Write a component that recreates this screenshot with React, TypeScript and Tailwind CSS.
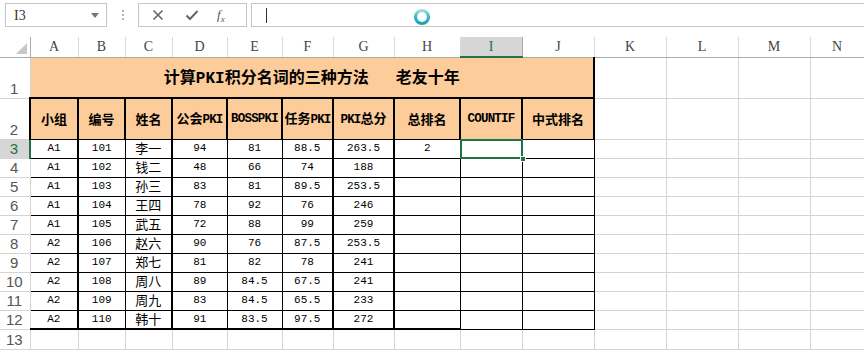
import React from "react";

const cols = ["A", "B", "C", "D", "E", "F", "G", "H", "I", "J", "K", "L", "M", "N"];
const widths = [30, 48, 47, 47, 55, 55, 51, 61, 66, 62, 72, 72, 72, 72, 54];

const rows = [
  ["A1", "101", "李一", "94", "81", "88.5", "263.5", "2"],
  ["A1", "102", "钱二", "48", "66", "74", "188", ""],
  ["A1", "103", "孙三", "83", "81", "89.5", "253.5", ""],
  ["A1", "104", "王四", "78", "92", "76", "246", ""],
  ["A1", "105", "武五", "72", "88", "99", "259", ""],
  ["A2", "106", "赵六", "90", "76", "87.5", "253.5", ""],
  ["A2", "107", "郑七", "81", "82", "78", "241", ""],
  ["A2", "108", "周八", "89", "84.5", "67.5", "241", ""],
  ["A2", "109", "周九", "83", "84.5", "65.5", "233", ""],
  ["A2", "110", "韩十", "91", "83.5", "97.5", "272", ""],
];

// right border per data column (A..J): thick after A, C, F, G
const rightBorder = [
  "border-r-2 border-r-black",
  "border-r border-r-black",
  "border-r-2 border-r-black",
  "border-r border-r-black",
  "border-r border-r-black",
  "border-r-2 border-r-black",
  "border-r-2 border-r-black",
  "border-r border-r-black",
  "border-r border-r-black",
  "border-r border-r-black",
];

const headers = ["小组", "编号", "姓名", "公会PKI", "BOSSPKI", "任务PKI", "PKI总分", "总排名", "COUNTIF", "中式排名"];

const cjk = { fontFamily: '"Noto Sans CJK SC", sans-serif' };
const mono = { fontFamily: '"Liberation Mono", "Noto Sans CJK SC", monospace' };

const RowHead = ({ n, active }: { n: number; active?: boolean }) => (
  <td
    className={`border-r border-b border-[#d4d4d4] p-0 pr-[1px] text-center align-bottom text-[15px] leading-[18px] ${
      active ? "bg-[#d6d6d6] text-[#217346] border-r-2 border-r-[#217346]" : "bg-white text-[#555]"
    }`}
    style={{ fontFamily: '"Liberation Sans", sans-serif' }}
  >
    {n}
  </td>
);

const Header = ({ text }: { text: string }) => {
  const parts = text.split(/([A-Z]+)/).filter(Boolean);
  return (
    <td className="border-2 border-black border-b border-b-black bg-[#fccc9a] p-0 text-center align-middle font-bold text-[13px] text-black whitespace-nowrap">
      {parts.map((p, i) =>
        /^[A-Z]+$/.test(p) ? (
          <span key={i} className="text-[12.5px] tracking-[-0.8px]" style={mono}>
            {p}
          </span>
        ) : (
          <span key={i} style={cjk}>
            {p}
          </span>
        )
      )}
    </td>
  );
};

const Empty = () => <td className="border-r border-b border-[#d4d4d4] p-0" />;

export default function App() {
  return (
    <div className="w-[864px] h-[352px] overflow-hidden bg-white select-none">
      {/* formula bar */}
      <div className="flex items-start h-[37px] pt-[3px]">
        <div className="ml-[5px] flex h-[24px] w-[102px] items-center justify-between border border-[#c6c6c6] pl-[8px] pr-[7px]">
          <span className="text-[14px] text-[#333]" style={{ fontFamily: '"Liberation Serif", serif' }}>
            I3
          </span>
          <svg width="8" height="5" viewBox="0 0 8 5">
            <path d="M0 0 L8 0 L4 5 Z" fill="#777" />
          </svg>
        </div>
        <div className="flex h-[24px] w-[31px] flex-col items-center justify-center gap-[2px]">
          <span className="h-[2px] w-[2px] bg-[#b5b5b5]" />
          <span className="h-[2px] w-[2px] bg-[#b5b5b5]" />
          <span className="h-[2px] w-[2px] bg-[#b5b5b5]" />
        </div>
        <div className="flex h-[24px] w-[109px] items-center border border-[#c6c6c6] pl-[13px]">
          <svg width="12" height="12" viewBox="0 0 12 12">
            <path d="M1.5 1.5 L10.5 10.5 M10.5 1.5 L1.5 10.5" stroke="#666" strokeWidth="1.6" />
          </svg>
          <svg className="ml-[21px]" width="14" height="12" viewBox="0 0 14 12">
            <path d="M1.5 6.5 L5 10 L12.5 2" stroke="#666" strokeWidth="2" fill="none" />
          </svg>
          <span className="ml-[18px] text-[13px] italic text-[#555]" style={{ fontFamily: '"Liberation Serif", serif' }}>
            f<sub className="text-[9px]">x</sub>
          </span>
        </div>
        <div className="relative ml-[4px] flex h-[24px] flex-1 items-center border-y border-l border-[#c6c6c6] pl-[14px]">
          <span className="h-[15px] w-px bg-[#333]" />
          <svg className="absolute left-[160px] top-[3px]" width="20" height="20" viewBox="0 0 20 20">
            <defs>
              <linearGradient id="ring" x1="0" y1="0" x2="0" y2="1">
                <stop offset="0" stopColor="#9fd8e0" />
                <stop offset="0.5" stopColor="#3bb8c4" />
                <stop offset="1" stopColor="#1aa6b0" />
              </linearGradient>
            </defs>
            <circle cx="10" cy="10" r="6.5" fill="none" stroke="url(#ring)" strokeWidth="3.2" />
          </svg>
        </div>
      </div>

      <table className="border-collapse table-fixed" style={{ width: 864 }}>
        <colgroup>
          {widths.map((w, i) => (
            <col key={i} style={{ width: w }} />
          ))}
        </colgroup>
        <tbody>
          {/* column letters */}
          <tr className="h-[20px]">
            <td className="border-r border-b border-[#ababab] p-0 relative">
              <svg className="absolute right-[3px] bottom-[3px]" width="11" height="11" viewBox="0 0 11 11">
                <path d="M11 0 L11 11 L0 11 Z" fill="#c8c8c8" />
              </svg>
            </td>
            {cols.map((c) => (
              <td
                key={c}
                className={`border-r border-b p-0 text-center text-[14px] leading-[19px] ${
                  c === "I"
                    ? "bg-[#d6d6d6] text-[#217346] border-b-2 border-b-[#217346] border-r-[#ababab]"
                    : "text-[#444] border-r-[#dadada] border-b-[#ababab]"
                }`}
                style={{ fontFamily: '"Liberation Serif", serif' }}
              >
                {c}
              </td>
            ))}
            <td className="border-b border-[#ababab] p-0" />
          </tr>

          {/* row 1 title */}
          <tr className="h-[41px]">
            <RowHead n={1} />
            <td
              colSpan={10}
              className="border-b-2 border-r-2 border-b-black border-r-black bg-[#fccc9a] p-0 text-center align-middle text-[16px] font-bold text-black whitespace-nowrap"
              style={cjk}
            >
              计算<span style={{ fontFamily: '"Liberation Mono", monospace' }} className="text-[16px]">PKI</span>
              积分名词的三种方法<span className="inline-block w-[27px]" />老友十年
            </td>
            {[0, 1, 2, 3, 4].map((i) => (
              <Empty key={i} />
            ))}
          </tr>

          {/* row 2 headers */}
          <tr className="h-[41px]">
            <RowHead n={2} />
            {headers.map((h) => (
              <Header key={h} text={h} />
            ))}
            {[0, 1, 2, 3, 4].map((i) => (
              <Empty key={i} />
            ))}
          </tr>

          {rows.map((r, ri) => (
            <tr key={ri} className="h-[19px]">
              <RowHead n={ri + 3} active={ri === 0} />
              {Array.from({ length: 10 }).map((_, ci) => {
                const v = r[ci] ?? "";
                const last = ri === rows.length - 1;
                const bottom = last && ci < 8 ? "border-b-2 border-b-black" : "border-b border-b-black";
                const selected = ri === 0 && ci === 8;
                const isName = ci === 2;
                return (
                  <td
                    key={ci}
                    className={`relative h-[18px] p-0 text-center align-middle text-black whitespace-nowrap leading-[17px] text-[11px] ${bottom} ${rightBorder[ci]} ${
                      ci === 0 ? "border-l border-l-black" : ""
                    }`}
                    style={mono}
                  >
                    {isName ? (
                      <span className="inline-block h-[15px] align-top text-[13px] leading-[15px]" style={cjk}>
                        {v}
                      </span>
                    ) : (
                      v
                    )}
                    {selected && (
                      <>
                        <span className="absolute -left-px -top-px -right-px -bottom-px border-2 border-[#217346]" />
                        <span className="absolute -right-[4px] -bottom-[4px] h-[6px] w-[6px] border border-white bg-[#217346]" />
                      </>
                    )}
                  </td>
                );
              })}
              {[0, 1, 2, 3, 4].map((i) => (
                <Empty key={i} />
              ))}
            </tr>
          ))}

          <tr className="h-[20px]">
            <RowHead n={13} />
            {Array.from({ length: 15 }).map((_, i) => (
              <Empty key={i} />
            ))}
          </tr>
        </tbody>
      </table>
    </div>
  );
}
